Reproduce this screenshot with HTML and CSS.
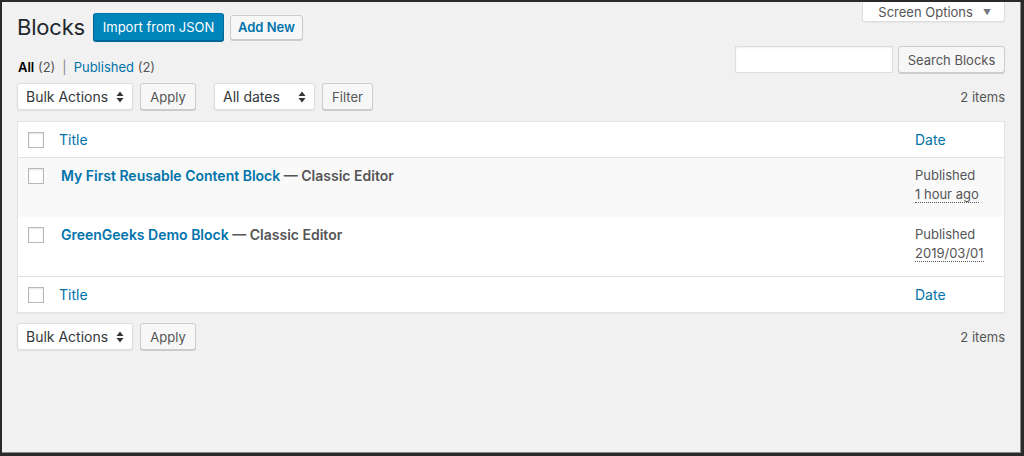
FILE: index.html
```html
<!DOCTYPE html>
<html lang="en">
<head>
<meta charset="utf-8">
<title>Blocks</title>
<link rel="stylesheet" href="styles.css">
</head>
<body>
<div class="frame">
  <div class="wrap">
    <div class="screen-meta">
      <button class="screen-options" type="button">Screen Options <span class="caret">▼</span></button>
    </div>
    <div class="heading">
      <h1 class="title">Blocks</h1>
      <a class="btn btn-primary" href="#">Import from JSON</a>
      <a class="btn btn-add" href="#">Add New</a>
    </div>

    <div class="filters">
      <ul class="subsubsub">
        <li><span class="current">All</span> <span class="count">(2)</span></li>
        <li class="sep">|</li>
        <li><a href="#">Published</a> <span class="count">(2)</span></li>
      </ul>
      <div class="search-box">
        <input class="search-input" type="search" aria-label="Search Blocks">
        <button class="btn btn-secondary btn-search" type="button">Search Blocks</button>
      </div>
    </div>

    <div class="tablenav">
      <div class="actions">
        <div class="select select-bulk">Bulk Actions
          <svg class="updown" viewBox="0 0 8 12" width="8" height="12"><path d="M4 0.5 L7.5 5 L0.5 5 Z M0.5 7 L7.5 7 L4 11.5 Z" fill="#32373c"/></svg>
        </div>
        <button class="btn btn-secondary btn-apply" type="button">Apply</button>
      </div>
      <div class="actions">
        <div class="select select-dates">All dates
          <svg class="updown" viewBox="0 0 8 12" width="8" height="12"><path d="M4 0.5 L7.5 5 L0.5 5 Z M0.5 7 L7.5 7 L4 11.5 Z" fill="#32373c"/></svg>
        </div>
        <button class="btn btn-secondary btn-filter" type="button">Filter</button>
      </div>
      <div class="num-items">2 items</div>
    </div>

    <div class="table">
      <div class="trow thead">
        <div class="cell cb"><span class="checkbox"></span></div>
        <div class="cell col-title"><a href="#">Title</a></div>
        <div class="cell col-date"><a href="#">Date</a></div>
      </div>
      <div class="trow item alt">
        <div class="cell cb"><span class="checkbox"></span></div>
        <div class="cell col-title"><a class="row-title" href="#">My First Reusable Content Block</a><span class="post-state"> — Classic Editor</span></div>
        <div class="cell col-date">Published<br><span class="abbr">1 hour ago</span></div>
      </div>
      <div class="trow item">
        <div class="cell cb"><span class="checkbox"></span></div>
        <div class="cell col-title"><a class="row-title" href="#">GreenGeeks Demo Block</a><span class="post-state"> — Classic Editor</span></div>
        <div class="cell col-date">Published<br><span class="abbr">2019/03/01</span></div>
      </div>
      <div class="trow tfoot">
        <div class="cell cb"><span class="checkbox"></span></div>
        <div class="cell col-title"><a href="#">Title</a></div>
        <div class="cell col-date"><a href="#">Date</a></div>
      </div>
    </div>

    <div class="tablenav tablenav-bottom">
      <div class="actions">
        <div class="select select-bulk">Bulk Actions
          <svg class="updown" viewBox="0 0 8 12" width="8" height="12"><path d="M4 0.5 L7.5 5 L0.5 5 Z M0.5 7 L7.5 7 L4 11.5 Z" fill="#32373c"/></svg>
        </div>
        <button class="btn btn-secondary btn-apply" type="button">Apply</button>
      </div>
      <div class="num-items">2 items</div>
    </div>
  </div>
</div>
</body>
</html>
```

FILE: styles.css
```css
* { box-sizing: border-box; }

html, body {
  margin: 0;
  padding: 0;
  background: #f1f1f1;
}

body {
  font-family: Inter, "Open Sans", "Liberation Sans", sans-serif;
  font-size: 13px;
  color: #444;
}

a { color: #0073aa; text-decoration: none; }

.frame {
  width: 1024px;
  height: 456px;
  background: #f1f1f1;
  border-style: solid;
  border-color: #2a2a2a;
  border-width: 2px 3px 3px 2px;
  box-shadow: inset -1px -1px 0 #8a8a8a;
  overflow: hidden;
}

.wrap {
  display: flow-root;
  padding: 0 16px 0 15px;
}

.screen-meta {
  float: right;
}

.screen-options {
  display: flex;
  align-items: center;
  gap: 10px;
  height: 20px;
  margin: 0;
  padding: 0 13px 0 15px;
  background: #fff;
  border: 1px solid #ddd;
  border-top: none;
  border-radius: 0 0 3px 3px;
  font-family: inherit;
  font-size: 13px;
  color: #555;
  box-shadow: 0 1px 1px rgba(0,0,0,0.04);
}

.caret {
  font-size: 8px;
  color: #72777c;
}

.heading {
  display: flex;
  align-items: center;
  gap: 6px;
  margin-top: 11px;
  height: 28px;
}

.title {
  margin: 0 2px 0 0;
  font-size: 22px;
  font-weight: 400;
  color: #23282d;
  line-height: 28px;
  letter-spacing: -0.2px;
}

.btn {
  display: inline-flex;
  align-items: center;
  justify-content: center;
  font-family: inherit;
  font-size: 13px;
  border-radius: 3px;
  border: 1px solid #ccc;
  background: #f7f7f7;
  color: #555;
  box-shadow: 0 1px 0 #ccc;
  padding: 0;
  margin: 0;
  white-space: nowrap;
}

.btn-primary {
  width: 131px;
  height: 28px;
  background: #0085ba;
  border-color: #0073aa #006799 #006799;
  color: #fff;
  box-shadow: 0 1px 0 #006799;
}

.btn-add {
  width: 73px;
  height: 25px;
  font-weight: 600;
  color: #0073aa;
}

.filters {
  display: flex;
  justify-content: space-between;
  align-items: flex-start;
  height: 27px;
  margin-top: 5px;
  clear: both;
}

.subsubsub {
  list-style: none;
  margin: 12px 0 0 1px;
  padding: 0;
  display: flex;
  gap: 5px;
  line-height: 18px;
  font-size: 13px;
  color: #666;
}

.subsubsub .current {
  color: #000;
  font-weight: 600;
}

.subsubsub .count { color: #555; }
.subsubsub .sep { color: #888; margin: 0 2px; }

.search-box {
  display: flex;
  gap: 5px;
}

.search-input {
  width: 158px;
  height: 27px;
  border: 1px solid #ddd;
  background: #fff;
  box-shadow: inset 0 1px 2px rgba(0,0,0,0.07);
  margin: 0;
}

.btn-search {
  width: 107px;
  height: 27px;
}

.tablenav {
  display: flex;
  align-items: center;
  gap: 18px;
  margin-top: 10px;
  height: 27px;
}

.actions {
  display: flex;
  gap: 7px;
}

.select {
  display: flex;
  align-items: center;
  justify-content: space-between;
  height: 27px;
  padding: 0 8px 0 8px;
  background: #fff;
  border: 1px solid #ddd;
  border-radius: 3px;
  font-size: 14px;
  color: #32373c;
  box-shadow: 0 1px 2px rgba(0,0,0,0.07);
}

.select-bulk { width: 116px; }
.select-dates { width: 101px; }

.btn-apply { width: 56px; height: 27px; }
.btn-filter { width: 51px; height: 27px; }

.num-items {
  margin-left: auto;
  color: #555;
  font-size: 13px;
}

.table {
  margin-top: 11px;
  background: #fff;
  border: 1px solid #e5e5e5;
  box-shadow: 0 1px 1px rgba(0,0,0,0.04);
}

.trow {
  display: flex;
}

.cell {
  padding: 8px 10px;
  line-height: 19px;
}

.cb {
  width: 36px;
  padding: 10px 0 0 10px;
}

.checkbox {
  display: block;
  width: 16px;
  height: 16px;
  border: 1px solid #b4b9be;
  background: #fff;
  box-shadow: inset 0 1px 2px rgba(0,0,0,0.1);
}

.col-title {
  flex: 1;
  padding-left: 5px;
}

.col-date {
  width: 99px;
  color: #555;
}

.thead, .tfoot {
  height: 36px;
}

.thead .cell, .tfoot .cell { font-size: 14px; }

.thead { border-bottom: 1px solid #e1e1e1; }
.tfoot { border-top: 1px solid #e1e1e1; }

.item {
  height: 59px;
}

.item .col-title { padding-left: 7px; }

.alt { background: #f9f9f9; }

.row-title {
  font-size: 14px;
  font-weight: 600;
}

.post-state {
  font-size: 14px;
  font-weight: 600;
  color: #555;
}

.abbr {
  border-bottom: 1px dotted #555;
  line-height: 15px;
  display: inline-block;
}

.tablenav-bottom {
  margin-top: 10px;
}
```
